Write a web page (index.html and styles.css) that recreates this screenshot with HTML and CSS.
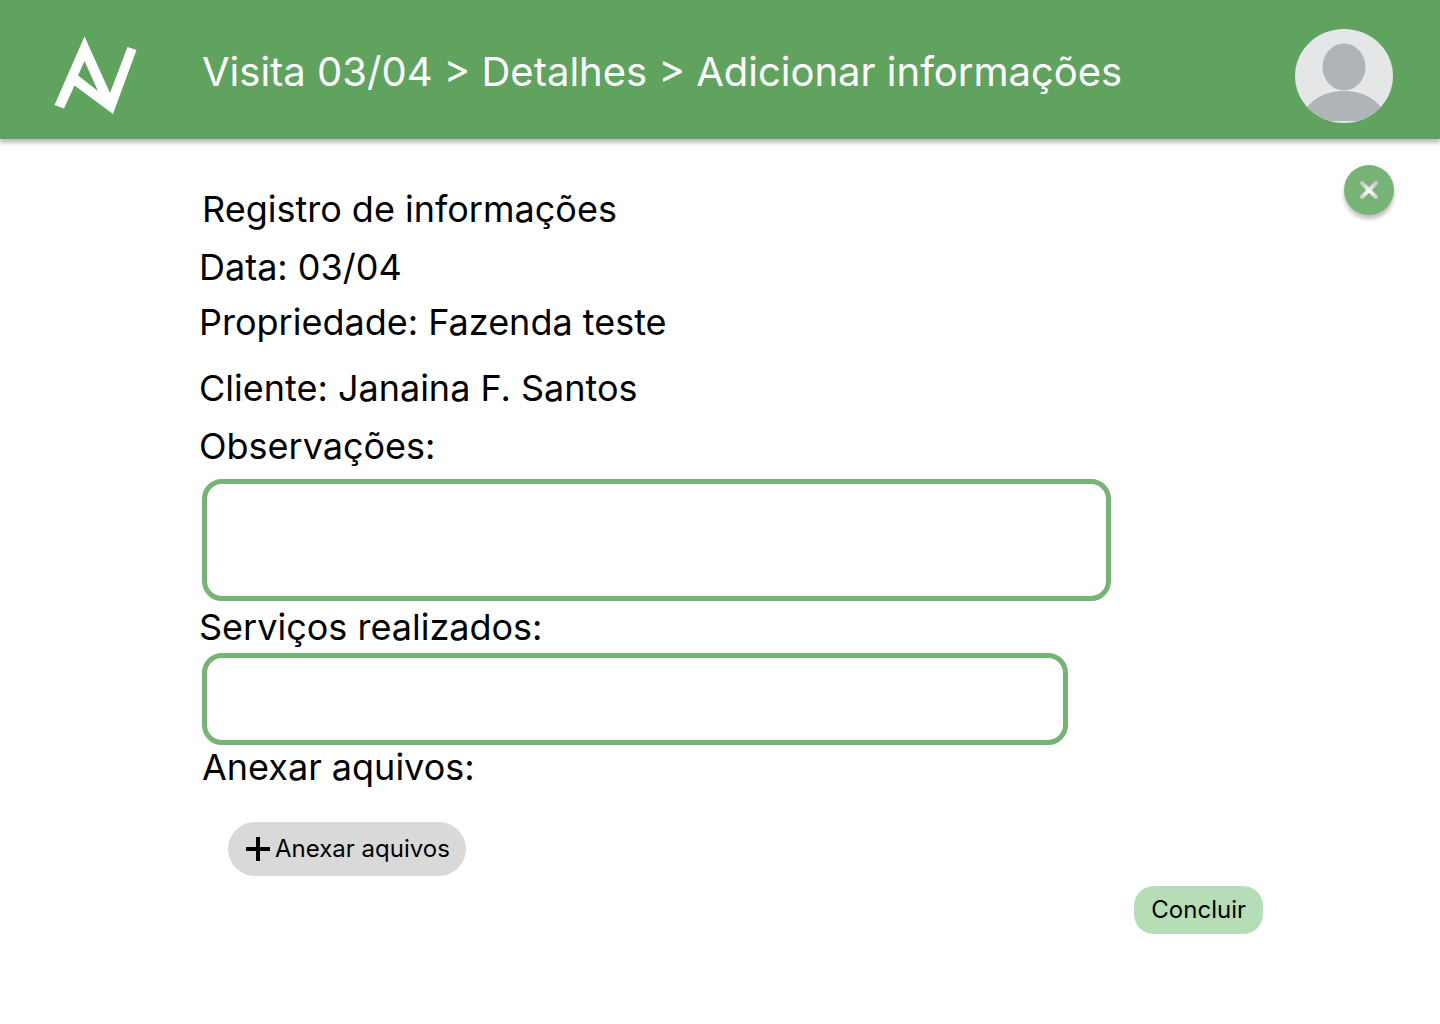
FILE: index.html
```html
<!DOCTYPE html>
<html lang="pt-BR">
<head>
  <meta charset="utf-8">
  <meta name="viewport" content="width=device-width, initial-scale=1">
  <title>Adicionar informações</title>
  <link rel="stylesheet" href="styles.css">
</head>
<body>
  <header class="topbar">
    <svg class="logo" viewBox="0 0 84 80" aria-hidden="true">
      <path fill="#fff" fill-rule="evenodd" d="M30.500 0.500 56 57 73.500 11 82.500 14 59 78 20.500 49.500 10 72.500 0.500 69ZM30.500 25 24 39.500 44 55Z"/>
    </svg>
    <h1 class="breadcrumb">Visita 03/04 &gt; Detalhes &gt; Adicionar informações</h1>
    <svg class="avatar" viewBox="0 0 98 94" role="img" aria-label="Perfil">
      <defs><clipPath id="face"><ellipse cx="49" cy="47" rx="49" ry="47"/></clipPath></defs>
      <g clip-path="url(#face)">
        <rect width="98" height="94" fill="#e4e6e8"/>
        <ellipse cx="49" cy="38" rx="21.500" ry="23.500" fill="#aeb4b8"/>
        <path fill="#aeb4b8" d="M8 84C16 70 30 62 49 62S82 70 90 84V92H8Z"/>
      </g>
    </svg>
  </header>
  <main class="page">
    <form class="record">
      <h2 class="line inset">Registro de informações</h2>
      <p class="line line-date">Data: 03/04</p>
      <p class="line line-property">Propriedade: Fazenda teste</p>
      <p class="line line-client">Cliente: Janaina F. Santos</p>
      <label class="line line-notes" for="notes">Observações:</label>
      <textarea class="field field-notes inset" id="notes"></textarea>
      <label class="line line-services" for="services">Serviços realizados:</label>
      <textarea class="field field-services inset" id="services"></textarea>
      <p class="line inset">Anexar aquivos:</p>
      <button class="attach" type="button">
        <svg class="plus" viewBox="0 0 24 24" aria-hidden="true"><path stroke="#000" stroke-width="4" d="M12 0V24M0 12H24"/></svg>
        Anexar aquivos
      </button>
      <button class="finish" type="submit">Concluir</button>
    </form>
    <button class="close" type="button" aria-label="Fechar">
      <svg class="cross" viewBox="0 0 20 20" aria-hidden="true">
        <defs>
          <radialGradient id="shade" gradientUnits="userSpaceOnUse" cx="10" cy="12" r="10">
            <stop offset="0" stop-color="#fff"/>
            <stop offset="1" stop-color="#cacaca"/>
          </radialGradient>
        </defs>
        <path stroke="url(#shade)" stroke-width="4" stroke-linecap="round" d="M3 3 17 17M17 3 3 17"/>
      </svg>
    </button>
  </main>
</body>
</html>
```
FILE: styles.css
```css
* {
  box-sizing: border-box;
}

body {
  margin: 0;
  background: #fff;
  color: #000;
  font-family: Inter, "Liberation Sans", sans-serif;
}

button {
  border: 0;
  color: inherit;
  font-family: inherit;
  font-size: 24px;
  line-height: 28px;
  cursor: pointer;
}

.topbar {
  display: flex;
  align-items: center;
  min-height: 139px;
  padding: 0 47px 0 54px;
  background: #60a35f;
  box-shadow: 0 4px 4px rgba(0, 0, 0, 0.25);
}

.logo {
  flex: none;
  width: 84px;
  height: 80px;
  margin-top: 12px;
}

.breadcrumb {
  flex: 1;
  margin: 4px 0 0 64px;
  color: #fff;
  font-size: 40px;
  font-weight: 400;
  line-height: 48px;
}

.avatar {
  flex: none;
  width: 98px;
  height: 94px;
  margin-top: 12px;
}

.page {
  display: flex;
  align-items: flex-start;
  padding: 26px 46px 88px 199px;
}

.record {
  display: flex;
  flex: 1;
  flex-direction: column;
  align-items: flex-start;
  padding: 22px 81px 0 0;
}

.line {
  margin: 0;
  font-size: 36px;
  font-weight: 400;
  line-height: 44px;
}

.line-date,
.line-notes {
  margin-top: 14px;
}

.line-property {
  margin-top: 11px;
}

.line-client {
  margin-top: 22px;
}

.line-services {
  margin-top: 4px;
}

.inset {
  margin-left: 3px;
}

.field {
  display: block;
  padding: 12px 16px;
  border: 5px solid #77b277;
  border-radius: 20px;
  outline: 0;
  background: #fff;
  font-family: inherit;
  font-size: 24px;
  line-height: 28px;
  resize: none;
}

.field-notes {
  width: 909px;
  max-width: 100%;
  height: 122px;
  margin-top: 11px;
}

.field-services {
  width: 866px;
  max-width: 100%;
  height: 92px;
  margin-top: 4px;
}

.attach {
  display: flex;
  align-items: center;
  gap: 5px;
  height: 54px;
  margin: 33px 0 0 29px;
  padding: 0 16px 0 18px;
  border-radius: 27px;
  background: #d9d9d9;
}

.plus {
  width: 24px;
  height: 24px;
}

.finish {
  align-self: flex-end;
  height: 48px;
  margin-top: 10px;
  padding: 0 17px;
  border-radius: 20px;
  background: #b6deb6;
}

.close {
  display: flex;
  flex: none;
  align-items: center;
  justify-content: center;
  width: 50px;
  height: 50px;
  padding: 0;
  border-radius: 50%;
  background: #77b277;
  box-shadow: 0 4px 4px rgba(0, 0, 0, 0.25);
}

.cross {
  width: 20px;
  height: 20px;
}
```
